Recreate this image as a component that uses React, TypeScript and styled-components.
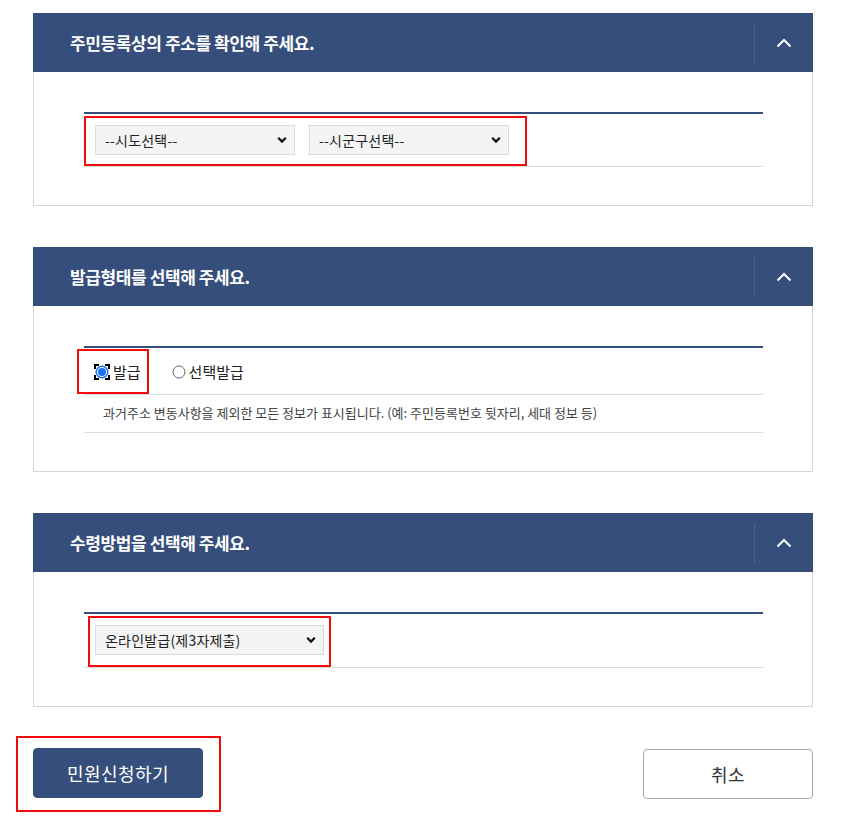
import styled, { createGlobalStyle } from 'styled-components';

const NAVY = '#354e7b';

const GlobalStyle = createGlobalStyle`
  html, body {
    margin: 0;
    padding: 0;
    background: #fff;
  }
  body {
    font-family: 'Noto Sans CJK KR', 'Noto Sans', sans-serif;
    color: #222;
  }
`;

const Page = styled.div`
  width: 780px;
  padding: 13px 0 13px 33px;
  display: flex;
  flex-direction: column;
  gap: 41px;
`;

const Card = styled.section``;

const Header = styled.div`
  height: 59px;
  background: ${NAVY};
  display: flex;
  align-items: center;
  justify-content: space-between;
  padding-left: 37px;
`;

const Title = styled.h2`
  margin: 0;
  color: #fff;
  font-size: 17px;
  font-weight: 700;
  letter-spacing: -0.4px;
`;

const Toggle = styled.button`
  width: 59px;
  height: 40px;
  border: 0;
  border-left: 1px solid #4b6390;
  background: transparent;
  display: flex;
  align-items: center;
  justify-content: center;
  padding: 0;
  cursor: pointer;
`;

const Body = styled.div`
  border: 1px solid #d6d6d6;
  border-top: 0;
  padding: 40px 49px 38px 50px;
`;

const Table = styled.div`
  border-top: 2px solid ${NAVY};
`;

const Row = styled.div<{ $pad?: number }>`
  display: flex;
  align-items: flex-start;
  padding-top: ${(p) => p.$pad ?? 2}px;
  border-bottom: 1px solid #dcdcdc;
`;

const NoteRow = styled.div`
  padding: 8px 19px 10px;
  font-size: 13px;
  color: #444;
  border-bottom: 1px solid #dcdcdc;
`;

const Highlight = styled.div<{ $offset?: number; $pad: string }>`
  display: flex;
  align-items: center;
  gap: 14px;
  margin-left: ${(p) => p.$offset ?? 0}px;
  padding: ${(p) => p.$pad};
  border: 2px solid #f20d0d;
`;

const SelectWrap = styled.div`
  position: relative;
  display: inline-flex;
`;

const Select = styled.select<{ $w: number }>`
  appearance: none;
  width: ${(p) => p.$w}px;
  height: 30px;
  padding: 0 28px 0 9px;
  background: #f4f4f4;
  border: 1px solid #dcdcdc;
  border-radius: 0;
  font-family: 'Noto Sans CJK KR', sans-serif;
  font-size: 14px;
  letter-spacing: 0.2px;
  color: #222;
`;

const Arrow = styled.svg`
  position: absolute;
  right: 8px;
  top: 11px;
  pointer-events: none;
`;

const Option = styled.label`
  display: flex;
  align-items: center;
  gap: 3px;
  font-size: 15px;
  color: #222;
  cursor: pointer;
`;

const Plain = styled.div`
  margin-left: 23px;
  padding: 12px 0;
`;

const Footer = styled.div`
  display: flex;
  align-items: center;
  justify-content: space-between;
  margin-top: -12px;
`;

const ButtonBox = styled.div`
  margin-left: -17px;
  padding: 10px 16px 12px 15px;
  border: 2px solid #f20d0d;
`;

const Button = styled.button<{ $primary?: boolean }>`
  width: 170px;
  height: 50px;
  border-radius: 4px;
  font-family: 'Noto Sans CJK KR', sans-serif;
  font-size: 18px;
  letter-spacing: 0.4px;
  cursor: pointer;
  background: ${(p) => (p.$primary ? NAVY : '#fff')};
  color: ${(p) => (p.$primary ? '#fff' : '#333')};
  border: 1px solid ${(p) => (p.$primary ? NAVY : '#aaa')};
`;

function ChevronUp() {
  return (
    <svg width="16" height="10" viewBox="0 0 16 10">
      <path d="M1.5 8.5 L8 2 L14.5 8.5" fill="none" stroke="#fff" strokeWidth="2" />
    </svg>
  );
}

function Dropdown({ width, label }: { width: number; label: string }) {
  return (
    <SelectWrap>
      <Select $w={width} defaultValue="">
        <option value="">{label}</option>
      </Select>
      <Arrow width="10" height="8" viewBox="0 0 10 8">
        <path d="M1.2 1.8 L5 5.6 L8.8 1.8" fill="none" stroke="#111" strokeWidth="2.2" />
      </Arrow>
    </SelectWrap>
  );
}

function Radio({ checked }: { checked?: boolean }) {
  if (!checked) {
    return (
      <svg width="14" height="14" viewBox="0 0 14 14">
        <circle cx="7" cy="7" r="6" fill="#fff" stroke="#666" strokeWidth="1" />
      </svg>
    );
  }
  return (
    <svg width="16" height="16" viewBox="0 0 16 16">
      <path
        d="M1 5 V1 H5 M11 1 H15 V5 M15 11 V15 H11 M5 15 H1 V11"
        fill="none"
        stroke="#000"
        strokeWidth="2"
      />
      <circle cx="8" cy="8" r="5.8" fill="#fff" stroke="#1a6ff2" strokeWidth="1.4" />
      <circle cx="8" cy="8" r="4" fill="#1a6ff2" />
    </svg>
  );
}

function Section({ title, children }: { title: string; children: React.ReactNode }) {
  return (
    <Card>
      <Header>
        <Title>{title}</Title>
        <Toggle aria-label="접기">
          <ChevronUp />
        </Toggle>
      </Header>
      <Body>
        <Table>{children}</Table>
      </Body>
    </Card>
  );
}

export default function App() {
  return (
    <>
      <GlobalStyle />
      <Page>
        <Section title="주민등록상의 주소를 확인해 주세요.">
          <Row>
            <Highlight $pad="7px 16px 9px 9px">
              <Dropdown width={200} label="--시도선택--" />
              <Dropdown width={200} label="--시군구선택--" />
            </Highlight>
          </Row>
        </Section>

        <Section title="발급형태를 선택해 주세요.">
          <Row $pad={1}>
            <Highlight $offset={-7} $pad="10px 6px 10px 15px">
              <Option>
                <Radio checked />
                발급
              </Option>
            </Highlight>
            <Plain>
              <Option>
                <Radio />
                선택발급
              </Option>
            </Plain>
          </Row>
          <NoteRow>과거주소 변동사항을 제외한 모든 정보가 표시됩니다. (예: 주민등록번호 뒷자리, 세대 정보 등)</NoteRow>
        </Section>

        <Section title="수령방법을 선택해 주세요.">
          <Row $pad={2}>
            <Highlight $offset={4} $pad="7px 5px 10px 5px">
              <Dropdown width={229} label="온라인발급(제3자제출)" />
            </Highlight>
          </Row>
        </Section>

        <Footer>
          <ButtonBox>
            <Button $primary>민원신청하기</Button>
          </ButtonBox>
          <Button>취소</Button>
        </Footer>
      </Page>
    </>
  );
}
